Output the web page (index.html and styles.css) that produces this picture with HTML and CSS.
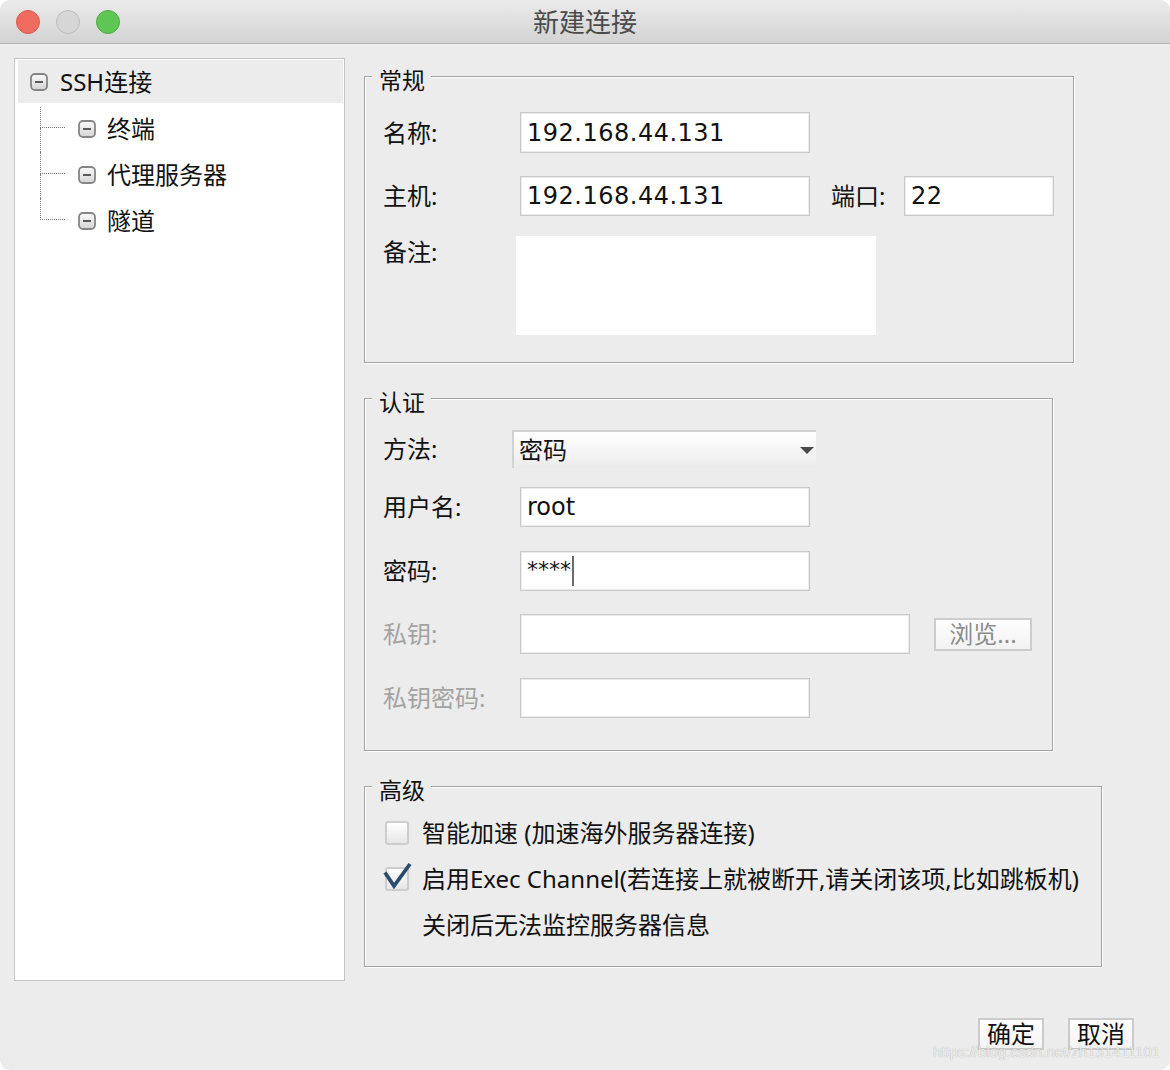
FILE: index.html
```html
<!DOCTYPE html>
<html lang="zh-CN">
<head>
  <meta charset="UTF-8" />
  <title>新建连接</title>
  <link rel="stylesheet" href="styles.css">
</head>
<body>
  <div class="window">
    <div class="titlebar">
      <div class="lights">
        <span class="light red"></span>
        <span class="light gray"></span>
        <span class="light green"></span>
      </div>
      <div class="title">新建连接</div>
      <div></div>
    </div>

    <div class="content">
      <div class="tree">
        <div class="node root">
          <svg class="toggle" viewBox="0 0 18 18" width="18" height="18">
            <defs>
              <linearGradient id="tg" x1="0" y1="0" x2="0" y2="1">
                <stop offset="0" stop-color="#fbfbfb"/>
                <stop offset="1" stop-color="#d4d4d4"/>
              </linearGradient>
            </defs>
            <rect x="1" y="1" width="16" height="16" rx="4" fill="url(#tg)" stroke="#858585" stroke-width="1.8"/>
            <path d="M5 9h8" stroke="#5a5a5a" stroke-width="1.8"/>
          </svg>
          <span>SSH连接</span>
        </div>
        <div class="children">
          <div class="node child">
            <span class="branch"><span class="branch-top"></span><span class="branch-bottom"></span></span>
            <svg class="toggle" viewBox="0 0 18 18" width="18" height="18"><rect x="1" y="1" width="16" height="16" rx="4" fill="url(#tg)" stroke="#858585" stroke-width="1.8"/><path d="M5 9h8" stroke="#5a5a5a" stroke-width="1.8"/></svg>
            <span>终端</span>
          </div>
          <div class="node child">
            <span class="branch"><span class="branch-top"></span><span class="branch-bottom"></span></span>
            <svg class="toggle" viewBox="0 0 18 18" width="18" height="18"><rect x="1" y="1" width="16" height="16" rx="4" fill="url(#tg)" stroke="#858585" stroke-width="1.8"/><path d="M5 9h8" stroke="#5a5a5a" stroke-width="1.8"/></svg>
            <span>代理服务器</span>
          </div>
          <div class="node child last">
            <span class="branch"><span class="branch-top"></span><span class="branch-bottom"></span></span>
            <svg class="toggle" viewBox="0 0 18 18" width="18" height="18"><rect x="1" y="1" width="16" height="16" rx="4" fill="url(#tg)" stroke="#858585" stroke-width="1.8"/><path d="M5 9h8" stroke="#5a5a5a" stroke-width="1.8"/></svg>
            <span>隧道</span>
          </div>
        </div>
      </div>

      <div class="forms">
        <fieldset class="group general">
          <legend>常规</legend>
          <div class="rows">
            <div class="row r-name">
              <span class="label">名称:</span>
              <div class="field w290 num">192.168.44.131</div>
            </div>
            <div class="row r-host">
              <span class="label">主机:</span>
              <div class="field w290 num">192.168.44.131</div>
              <span class="label port-label">端口:</span>
              <div class="field port num">22</div>
            </div>
            <div class="row r-notes">
              <span class="label">备注:</span>
              <div class="notes"></div>
            </div>
          </div>
        </fieldset>

        <fieldset class="group auth">
          <legend>认证</legend>
          <div class="rows">
            <div class="row r-method">
              <span class="label">方法:</span>
              <div class="select">
                <span>密码</span>
                <svg width="14" height="7" viewBox="0 0 14 7"><path d="M0 0h14L7 7z" fill="#4a4a4a"/></svg>
              </div>
            </div>
            <div class="row r-user">
              <span class="label">用户名:</span>
              <div class="field w290">root</div>
            </div>
            <div class="row r-pass">
              <span class="label">密码:</span>
              <div class="field w290"><span class="stars">****</span><span class="caret"></span></div>
            </div>
            <div class="row r-key">
              <span class="label disabled">私钥:</span>
              <div class="field w390"></div>
              <div class="browse">浏览...</div>
            </div>
            <div class="row r-keypass">
              <span class="label disabled">私钥密码:</span>
              <div class="field w290"></div>
            </div>
          </div>
        </fieldset>

        <fieldset class="group advanced">
          <legend>高级</legend>
          <div class="rows">
            <div class="row r-cb1">
              <span class="check"></span>
              <span>智能加速 (加速海外服务器连接)</span>
            </div>
            <div class="row r-cb2">
              <span class="check">
                <svg width="30" height="30" viewBox="0 0 30 30"><path d="M2 10.5 L11 24 L27 2" fill="none" stroke="#2a4c6f" stroke-width="3.8" stroke-linejoin="miter"/></svg>
              </span>
              <span>启用Exec Channel(若连接上就被断开,请关闭该项,比如跳板机)</span>
            </div>
            <div class="row r-note">
              <span>关闭后无法监控服务器信息</span>
            </div>
          </div>
        </fieldset>
      </div>
    </div>

    <div class="footer">
      <div class="btn">确定</div>
      <div class="btn">取消</div>
    </div>

    <div class="watermark">https://blog.csdn.net/zh131411101</div>
  </div>
</body>
</html>
```

FILE: styles.css
```css
* {
box-sizing: border-box;
}

body {
margin: 0;
background: #fff;
font-family: "Noto Sans", "Noto Sans CJK SC", sans-serif;
font-size: 24px;
line-height: 24px;
color: #111;
}

.window {
position: relative;
width: 1170px;
height: 1070px;
background: #ececec;
border-radius: 10px;
overflow: hidden;
}

/* title bar */
.titlebar {
height: 44px;
display: grid;
grid-template-columns: 1fr auto 1fr;
align-items: center;
background: linear-gradient(#ebebeb, #d3d3d3);
border-bottom: 1px solid #b2b2b2;
}

.lights {
display: flex;
gap: 16px;
padding-left: 16px;
}

.light {
width: 24px;
height: 24px;
border-radius: 50%;
}

.light.red {
background: #ef6b60;
border: 1px solid #dc5a4f;
}

.light.gray {
background: #d6d6d6;
border: 1px solid #bdbdbd;
}

.light.green {
background: #5fc656;
border: 1px solid #4eab44;
}

.title {
font-size: 26px;
line-height: 26px;
color: #4b4b4b;
}

/* main area */
.content {
display: flex;
gap: 19px;
padding: 14px 0 0 14px;
}

.tree {
width: 331px;
height: 923px;
flex: none;
background: #fff;
border: 1px solid #c4c4c4;
padding: 1px 1px 0 3px;
}

.node {
display: flex;
align-items: center;
}

.node.root {
height: 43px;
padding-left: 12px;
gap: 12px;
background: #ececec;
}

.children {
margin-top: 3px;
}

.node.child {
height: 46px;
padding-left: 22px;
}

.node.child .toggle {
margin-right: 11px;
}

.branch {
align-self: stretch;
width: 25px;
margin-right: 13px;
display: flex;
flex-direction: column;
}

.branch-top {
height: 22px;
border-left: 1px dotted #7a7a7a;
border-bottom: 1px dotted #7a7a7a;
}

.child:first-child .branch-top {
margin-top: 1px;
height: 21px;
}

.branch-bottom {
flex: 1;
border-left: 1px dotted #7a7a7a;
}

.child.last .branch-bottom {
border-left: none;
}

.toggle {
flex: none;
}

/* right column */
.forms {
padding-top: 2px;
display: flex;
flex-direction: column;
align-items: flex-start;
gap: 19px;
}

.group {
margin: 0;
padding: 0;
min-width: 0;
border: 1px solid #a3a3a3;
box-shadow: 1px 1px 0 #fff, inset 1px 1px 0 #fff;
}

.group legend {
margin-left: 7px;
padding: 8px 6px 0 7px;
font-size: 23px;
line-height: 24px;
background: #ececec;
}

.general {
width: 710px;
}

.auth {
width: 689px;
}

.advanced {
width: 738px;
}

.rows {
padding-left: 18px;
}

.general .rows {
padding-bottom: 27px;
}

.auth .rows {
padding-bottom: 32px;
}

.advanced .rows {
padding-left: 21px;
padding-bottom: 29px;
}

.row {
display: flex;
align-items: center;
}

.label {
width: 137px;
flex: none;
}

.label.disabled {
color: #a3a3a3;
}

.port-label {
width: 73px;
margin-left: 21px;
}

.field {
height: 40px;
flex: none;
display: flex;
align-items: center;
padding-left: 6px;
background: #fff;
border: 1px solid #c9c9c9;
box-shadow: inset 0 0 0 1px #ebebeb;
font-family: "DejaVu Sans", sans-serif;
font-size: 24px;
}

.field.num {
letter-spacing: 0.5px;
}

.w290 {
width: 290px;
}

.w390 {
width: 390px;
}

.port {
width: 150px;
}

.r-name {
margin-top: 20px;
}

.r-name .field {
height: 41px;
}

.r-host {
margin-top: 23px;
}

.r-notes {
margin-top: 20px;
align-items: flex-start;
}

.r-notes .label {
padding-top: 4px;
}

.notes {
width: 360px;
height: 99px;
margin-left: -4px;
background: #fff;
}

.r-method {
margin-top: 16px;
}

.select {
width: 304px;
height: 38px;
margin-left: -8px;
display: flex;
align-items: center;
justify-content: space-between;
padding: 0 2px 0 5px;
background: linear-gradient(#ffffff, #ebebeb);
border-top: 2px solid #d2d2d2;
border-left: 2px solid #d2d2d2;
}

.r-user {
margin-top: 19px;
}

.r-pass {
margin-top: 24px;
}

.stars {
align-self: flex-start;
padding-top: 6px;
font-size: 22px;
}

.caret {
width: 2px;
height: 30px;
margin-left: 1px;
background: #6b6b6b;
}

.r-key {
margin-top: 23px;
}

.browse {
width: 98px;
height: 33px;
margin-left: 24px;
display: flex;
align-items: center;
justify-content: center;
color: #8c8c8c;
background: linear-gradient(#ffffff, #f1f1f1);
border: 2px solid #cdcdcd;
}

.r-keypass {
margin-top: 24px;
}

.r-cb1 {
margin-top: 19px;
gap: 13px;
}

.r-cb2 {
margin-top: 22px;
gap: 13px;
}

.r-note {
margin-top: 22px;
padding-left: 36px;
}

.check {
position: relative;
width: 24px;
height: 24px;
flex: none;
border: 2px solid #cdcdcd;
border-radius: 3px;
background: linear-gradient(#ffffff, #e6e6e6);
}

.r-cb1 .check,
.r-cb2 .check {
margin-left: -1px;
}

.check svg {
position: absolute;
left: -4px;
top: -7px;
overflow: visible;
}

/* buttons */
.footer {
display: flex;
justify-content: flex-end;
gap: 24px;
padding: 37px 36px 0 0;
}

.btn {
width: 66px;
height: 32px;
display: flex;
align-items: center;
justify-content: center;
background: linear-gradient(#ffffff, #f3f3f3);
border: 2px solid #cbcbcb;
}

.watermark {
position: absolute;
left: 933px;
top: 1042px;
font-family: "Liberation Sans", sans-serif;
font-size: 15px;
line-height: 20px;
color: rgba(255, 255, 255, 0.8);
text-shadow: 0 0 1px rgba(0, 0, 0, 0.35);
}
```
